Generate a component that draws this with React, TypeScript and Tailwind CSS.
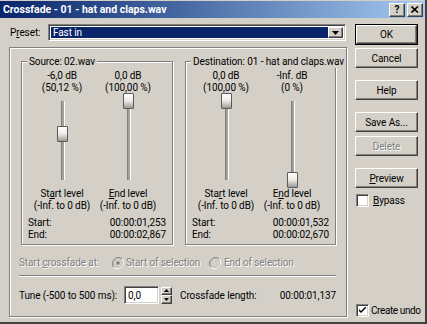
import React from "react";

// Classic 3D edges used all over the dialog
const raised =
  "bg-[#d4d0c8] border border-t-white border-l-white border-r-[#404040] border-b-[#404040] shadow-[inset_-1px_-1px_0_#808080]";
const sunken =
  "border border-t-[#808080] border-l-[#808080] border-r-white border-b-white shadow-[inset_1px_1px_0_#404040,inset_-1px_-1px_0_#d4d0c8]";
const etched = "border border-[#808080] shadow-[inset_1px_1px_0_#fff,1px_1px_0_#fff]";

const Btn = ({
  children,
  disabled,
  isDefault,
}: {
  children: React.ReactNode;
  disabled?: boolean;
  isDefault?: boolean;
}) => {
  const face = (
    <div
      className={`${raised} flex h-full w-full items-center justify-center ${
        disabled ? "text-[#808080] [text-shadow:1px_1px_0_#fff]" : "text-black"
      }`}
    >
      {children}
    </div>
  );
  if (isDefault) {
    return <div className="h-[21px] w-[63px] border border-black">{face}</div>;
  }
  return <div className="h-[20px] w-[63px]">{face}</div>;
};

const Check = ({ checked }: { checked?: boolean }) => (
  <div className={`${sunken} flex h-[13px] w-[13px] shrink-0 items-center justify-center bg-white`}>
    {checked && (
      <svg width="7" height="7" viewBox="0 0 7 7">
        <path d="M0 2 L0 4 L2 6 L7 1 L7 -1 L2 4 Z" fill="#000" />
      </svg>
    )}
  </div>
);

const Radio = ({ selected }: { selected?: boolean }) => (
  <svg width="12" height="12" viewBox="0 0 12 12">
    <path d="M10.2 1.8 A6 6 0 0 0 1.8 10.2" stroke="#808080" fill="none" />
    <path d="M1.8 10.2 A6 6 0 0 0 10.2 1.8" stroke="#fff" fill="none" />
    <circle cx="6" cy="6" r="4.5" fill="#d4d0c8" stroke="#c0bcb4" />
    {selected && <circle cx="6" cy="6" r="1.8" fill="#808080" />}
  </svg>
);

// Vertical level slider, pos 1 = top (0 dB), 0 = bottom (-Inf.)
const Slider = ({ pos }: { pos: number }) => (
  <div className="relative mx-auto h-[94px] w-[11px]">
    <div className="absolute left-[4px] top-[7px] h-[79px] w-[4px] border-l border-r border-l-[#808080] border-r-white bg-[#a4a09a]" />
    <div
      className="absolute left-0 h-[16px] w-[11px] rounded-[1px] border border-[#5a5a5a] bg-linear-to-b from-white via-[#ecebe6] to-[#9c9a94]"
      style={{ top: Math.round(7 + (1 - pos) * 79 - 8) }}
    />
  </div>
);

const LevelColumn = ({
  db,
  pct,
  pos,
  label,
}: {
  db: string;
  pct: string;
  pos: number;
  label: React.ReactNode;
}) => (
  <div className="flex w-[66px] flex-col items-center">
    <div className="h-[12px] leading-[12px]">{db}</div>
    <div className="h-[12px] leading-[12px]">{pct}</div>
    <Slider pos={pos} />
    <div className="h-[12px] leading-[12px]">{label}</div>
    <div className="h-[12px] whitespace-nowrap leading-[12px]">(-Inf. to 0 dB)</div>
  </div>
);

const Group = ({
  title,
  width,
  children,
  start,
  end,
}: {
  title: string;
  width: string;
  children: React.ReactNode;
  start: string;
  end: string;
}) => (
  <div className={`${etched} relative h-[184px] ${width} pt-[8px]`}>
    <div className="absolute -top-[7px] left-[5px] bg-[#d4d0c8] px-[2px] leading-[13px] whitespace-nowrap">
      {title}
    </div>
    <div className="flex pl-[7px]">{children}</div>
    <div className="mt-[5px] flex flex-col px-[6px]">
      <div className="flex h-[12px] justify-between leading-[12px]">
        <span>Start:</span>
        <span>{start}</span>
      </div>
      <div className="flex h-[12px] justify-between leading-[12px]">
        <span>End:</span>
        <span>{end}</span>
      </div>
    </div>
  </div>
);

export default function App() {
  return (
    <div className="h-[324px] w-[427px] overflow-hidden border-b-2 border-r-2 border-b-[#404040] border-r-[#404040] bg-[#d4d0c8] pt-[1px] font-['Roboto','Liberation_Sans',sans-serif] text-[10px] tracking-[-0.1px] text-black">
      {/* title bar */}
      <div className="flex h-[17px] items-center justify-between bg-linear-to-r from-[#0a246a] to-[#a6caf0] pl-[3px] pr-[2px]">
        <span className="text-[10.5px] font-bold tracking-normal text-white">Crossfade - 01 - hat and claps.wav</span>
        <div className="flex gap-[2px]">
          <div className={`${raised} flex h-[14px] w-[16px] items-center justify-center text-[10px] font-bold leading-none`}>
            ?
          </div>
          <div className={`${raised} flex h-[14px] w-[16px] items-center justify-center`}>
            <svg width="8" height="7" viewBox="0 0 8 7">
              <path d="M0.5 0.5 L7 6.5 M7 0.5 L0.5 6.5" stroke="#000" strokeWidth="1.6" />
            </svg>
          </div>
        </div>
      </div>

      <div className="flex">
        {/* left side */}
        <div className="w-[348px] pl-[9px] pt-[6px]">
          <div className="flex h-[17px] items-center">
            <div className="w-[39px] pl-[1px]">
              P<span className="underline">r</span>eset:
            </div>
            <div className={`${sunken} flex h-[17px] w-[298px] items-center bg-white p-[2px]`}>
              <div className="flex h-full flex-1 items-center bg-[#0a246a] pl-[2px] text-white">Fast in</div>
              <div className={`${raised} flex h-full w-[15px] items-center justify-center`}>
                <svg width="7" height="4" viewBox="0 0 7 4">
                  <path d="M0 0 H7 L3.5 4 Z" fill="#000" />
                </svg>
              </div>
            </div>
          </div>

          <div className={`${etched} mt-[6px] h-[270px] w-[338px] pl-[9px] pt-[13px]`}>
            <div className="ml-[2px] flex gap-[12px]">
              <Group title="Source: 02.wav" width="w-[152px]" start="00:00:01,253" end="00:00:02,867">
                <LevelColumn
                  db="-6,0 dB"
                  pct="(50,12 %)"
                  pos={0.58}
                  label={
                    <>
                      St<span className="underline">a</span>rt level
                    </>
                  }
                />
                <LevelColumn
                  db="0,0 dB"
                  pct="(100,00 %)"
                  pos={1}
                  label={
                    <>
                      <span className="underline">E</span>nd level
                    </>
                  }
                />
              </Group>
              <Group
                title="Destination: 01 - hat and claps.wav"
                width="w-[151px]"
                start="00:00:01,532"
                end="00:00:02,670"
              >
                <LevelColumn
                  db="0,0 dB"
                  pct="(100,00 %)"
                  pos={1}
                  label={
                    <>
                      Sta<span className="underline">r</span>t level
                    </>
                  }
                />
                <LevelColumn
                  db="-Inf. dB"
                  pct="(0 %)"
                  pos={0}
                  label={
                    <>
                      E<span className="underline">n</span>d level
                    </>
                  }
                />
              </Group>
            </div>

            {/* start crossfade at */}
            <div className="mt-[11px] flex h-[13px] items-center text-[#808080] [text-shadow:1px_1px_0_#fff]">
              <div className="w-[93px]">
                Start <span className="underline">c</span>rossfade at:
              </div>
              <div className="flex w-[97px] items-center gap-[2px]">
                <Radio selected />
                <span>Start of selection</span>
              </div>
              <div className="flex items-center gap-[3px]">
                <Radio />
                <span>End of selection</span>
              </div>
            </div>

            <div className="mt-[6px] h-[2px] w-[317px] border-t border-b border-t-[#808080] border-b-white" />

            {/* tune row */}
            <div className="mt-[9px] flex h-[18px] items-center">
              <div className="w-[105px]">Tune (-500 to 500 ms):</div>
              <div className={`${sunken} flex h-[18px] w-[35px] items-center bg-white pl-[3px]`}>0,0</div>
              <div className="ml-[2px] flex h-[17px] w-[11px] flex-col">
                <div className={`${raised} flex flex-1 items-center justify-center`}>
                  <svg width="5" height="3" viewBox="0 0 5 3">
                    <path d="M0 3 H5 L2.5 0 Z" fill="#000" />
                  </svg>
                </div>
                <div className={`${raised} flex flex-1 items-center justify-center`}>
                  <svg width="5" height="3" viewBox="0 0 5 3">
                    <path d="M0 0 H5 L2.5 3 Z" fill="#000" />
                  </svg>
                </div>
              </div>
              <div className="ml-[8px] flex w-[156px] justify-between">
                <span>Crossfade length:</span>
                <span>00:00:01,137</span>
              </div>
            </div>
          </div>
        </div>

        {/* right side buttons */}
        <div className="ml-[7px] flex h-[300px] flex-col pt-[6px]">
          <Btn isDefault>OK</Btn>
          <div className="mt-[3px]">
            <Btn>Cancel</Btn>
          </div>
          <div className="mt-[12px]">
            <Btn>Help</Btn>
          </div>
          <div className="mt-[12px]">
            <Btn>Save As...</Btn>
          </div>
          <div className="mt-[4px]">
            <Btn disabled>Delete</Btn>
          </div>
          <div className="mt-[12px]">
            <Btn>
              <span className="underline">P</span>review
            </Btn>
          </div>
          <div className="mt-[5px] flex items-center gap-[4px] pl-[1px]">
            <Check />
            <span>
              <span className="underline">B</span>ypass
            </span>
          </div>
          <div className="mt-auto flex items-center gap-[2px] whitespace-nowrap pl-[1px]">
            <Check checked />
            <span className="tracking-[-0.4px]">Create undo</span>
          </div>
        </div>
      </div>
    </div>
  );
}
